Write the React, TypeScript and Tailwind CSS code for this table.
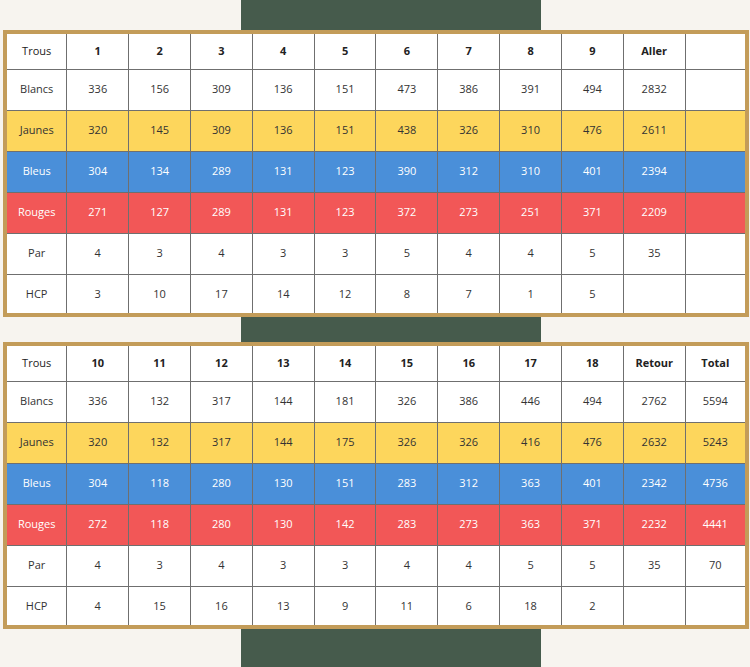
import React from "react";

type Row = {
  label: string;
  values: (string | number)[];
  tone: "white" | "yellow" | "blue" | "red";
};

const toneClass: Record<Row["tone"], string> = {
  white: "bg-white text-[#333]",
  yellow: "bg-[#fdd65c] text-[#333]",
  blue: "bg-[#4a8fd9] text-white",
  red: "bg-[#f25757] text-white",
};

const front = {
  head: [1, 2, 3, 4, 5, 6, 7, 8, 9, "Aller", ""],
  rows: [
    { label: "Blancs", tone: "white", values: [336, 156, 309, 136, 151, 473, 386, 391, 494, 2832, ""] },
    { label: "Jaunes", tone: "yellow", values: [320, 145, 309, 136, 151, 438, 326, 310, 476, 2611, ""] },
    { label: "Bleus", tone: "blue", values: [304, 134, 289, 131, 123, 390, 312, 310, 401, 2394, ""] },
    { label: "Rouges", tone: "red", values: [271, 127, 289, 131, 123, 372, 273, 251, 371, 2209, ""] },
    { label: "Par", tone: "white", values: [4, 3, 4, 3, 3, 5, 4, 4, 5, 35, ""] },
    { label: "HCP", tone: "white", values: [3, 10, 17, 14, 12, 8, 7, 1, 5, "", ""] },
  ] as Row[],
};

const back = {
  head: [10, 11, 12, 13, 14, 15, 16, 17, 18, "Retour", "Total"],
  rows: [
    { label: "Blancs", tone: "white", values: [336, 132, 317, 144, 181, 326, 386, 446, 494, 2762, 5594] },
    { label: "Jaunes", tone: "yellow", values: [320, 132, 317, 144, 175, 326, 326, 416, 476, 2632, 5243] },
    { label: "Bleus", tone: "blue", values: [304, 118, 280, 130, 151, 283, 312, 363, 401, 2342, 4736] },
    { label: "Rouges", tone: "red", values: [272, 118, 280, 130, 142, 283, 273, 363, 371, 2232, 4441] },
    { label: "Par", tone: "white", values: [4, 3, 4, 3, 3, 4, 4, 5, 5, 35, 70] },
    { label: "HCP", tone: "white", values: [4, 15, 16, 13, 9, 11, 6, 18, 2, "", ""] },
  ] as Row[],
};

const ScoreTable = ({ head, rows }: { head: (string | number)[]; rows: Row[] }) => (
  <table className="w-[746px] table-fixed border-collapse border-4 border-[#c39c59] text-center text-[11px]">
    <tbody>
      <tr className="h-[37px] bg-white text-[#222]">
        <td className="border border-[#6f6f6f]">Trous</td>
        {head.map((h, i) => (
          <td key={i} className="border border-[#6f6f6f] font-bold">
            {h}
          </td>
        ))}
      </tr>
      {rows.map((r) => (
        <tr key={r.label} className={`h-[41px] ${toneClass[r.tone]}`}>
          <td className="border border-[#6f6f6f]">{r.label}</td>
          {r.values.map((v, i) => (
            <td key={i} className="border border-[#6f6f6f]">
              {v}
            </td>
          ))}
        </tr>
      ))}
    </tbody>
  </table>
);

export default function App() {
  return (
    <div
      className="flex h-[667px] w-[750px] flex-col gap-[25px] overflow-hidden bg-[linear-gradient(to_right,#f7f4ef_241px,#465b4c_241px,#465b4c_541px,#f7f4ef_541px)] pl-[3px] pt-[30px]"
      style={{ fontFamily: '"Open Sans", Arial, sans-serif' }}
    >
      <ScoreTable head={front.head} rows={front.rows} />
      <ScoreTable head={back.head} rows={back.rows} />
    </div>
  );
}
